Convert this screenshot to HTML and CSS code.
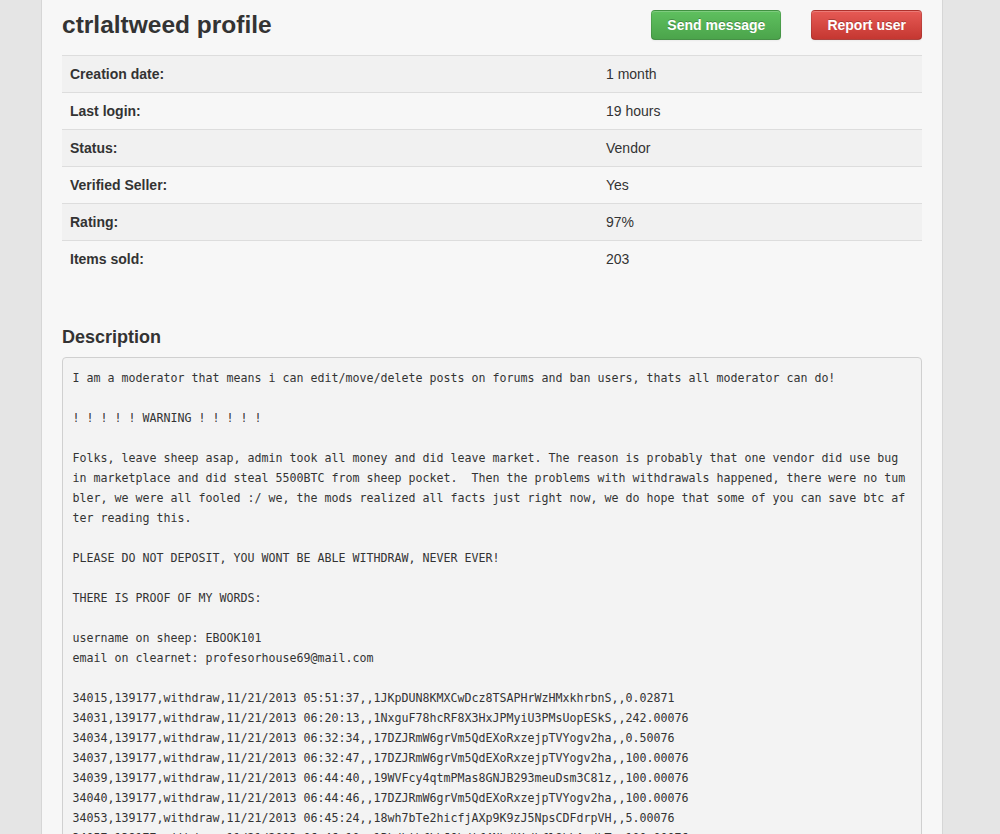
FILE: index.html
```html
<!DOCTYPE html>
<html lang="en">
<head>
<meta charset="utf-8">
<title>ctrlaltweed profile</title>
<link rel="stylesheet" href="styles.css">
</head>
<body>
<div class="panel">
  <div class="header">
    <h3 class="title">ctrlaltweed profile</h3>
    <div class="actions">
      <a class="btn btn-success" href="#">Send message</a>
      <a class="btn btn-danger" href="#">Report user</a>
    </div>
  </div>
  <table class="info">
    <tbody>
      <tr><th>Creation date:</th><td>1 month</td></tr>
      <tr><th>Last login:</th><td>19 hours</td></tr>
      <tr><th>Status:</th><td>Vendor</td></tr>
      <tr><th>Verified Seller:</th><td>Yes</td></tr>
      <tr><th>Rating:</th><td>97%</td></tr>
      <tr><th>Items sold:</th><td>203</td></tr>
    </tbody>
  </table>
  <h4 class="section-title">Description</h4>
  <pre class="description">I am a moderator that means i can edit/move/delete posts on forums and ban users, thats all moderator can do!

! ! ! ! ! WARNING ! ! ! ! !

Folks, leave sheep asap, admin took all money and did leave market. The reason is probably that one vendor did use bug in marketplace and did steal 5500BTC from sheep pocket.  Then the problems with withdrawals happened, there were no tumbler, we were all fooled :/ we, the mods realized all facts just right now, we do hope that some of you can save btc after reading this.

PLEASE DO NOT DEPOSIT, YOU WONT BE ABLE WITHDRAW, NEVER EVER!

THERE IS PROOF OF MY WORDS:

username on sheep: EBOOK101
email on clearnet: profesorhouse69@mail.com

34015,139177,withdraw,11/21/2013 05:51:37,,1JKpDUN8KMXCwDcz8TSAPHrWzHMxkhrbnS,,0.02871
34031,139177,withdraw,11/21/2013 06:20:13,,1NxguF78hcRF8X3HxJPMyiU3PMsUopESkS,,242.00076
34034,139177,withdraw,11/21/2013 06:32:34,,17DZJRmW6grVm5QdEXoRxzejpTVYogv2ha,,0.50076
34037,139177,withdraw,11/21/2013 06:32:47,,17DZJRmW6grVm5QdEXoRxzejpTVYogv2ha,,100.00076
34039,139177,withdraw,11/21/2013 06:44:40,,19WVFcy4qtmPMas8GNJB293meuDsm3C81z,,100.00076
34040,139177,withdraw,11/21/2013 06:44:46,,17DZJRmW6grVm5QdEXoRxzejpTVYogv2ha,,100.00076
34053,139177,withdraw,11/21/2013 06:45:24,,18wh7bTe2hicfjAXp9K9zJ5NpsCDFdrpVH,,5.00076
34057,139177,withdraw,11/21/2013 06:46:10,,1PkdhtbfLhJQbdtf4NbdKtdhfl8bhAwdhT,,100.00076
34061,139177,withdraw,11/21/2013 06:47:31,,17DZJRmW6grVm5QdEXoRxzejpTVYogv2ha,,50.00076</pre>
</div>
</body>
</html>
```

FILE: styles.css
```css
html, body {
  margin: 0;
  padding: 0;
}

body {
  background: #e5e5e5;
  font-family: "Liberation Sans", Arial, sans-serif;
  font-size: 14px;
  line-height: 20px;
  color: #333333;
}

.panel {
  width: 860px;
  margin-left: 41px;
  padding: 0 20px 40px;
  background: #f7f7f7;
  border-left: 1px solid #d6d6d6;
  border-right: 1px solid #d6d6d6;
}

.header {
  display: flex;
  align-items: center;
  justify-content: space-between;
  height: 40px;
  padding-top: 5px;
  margin-bottom: 10px;
}

.title {
  margin: 0;
  font-size: 24.5px;
  line-height: 40px;
  font-weight: bold;
  color: #333333;
}

.actions {
  display: flex;
  gap: 30px;
}

.btn {
  display: inline-block;
  padding: 4px 15px;
  font-size: 14px;
  line-height: 20px;
  font-weight: bold;
  color: #ffffff;
  text-decoration: none;
  text-shadow: 0 -1px 0 rgba(0, 0, 0, 0.25);
  border: 1px solid rgba(0, 0, 0, 0.12);
  border-bottom-color: rgba(0, 0, 0, 0.25);
  border-radius: 4px;
  box-shadow: inset 0 1px 0 rgba(255, 255, 255, 0.2), 0 1px 2px rgba(0, 0, 0, 0.05);
}

.btn-success {
  background: linear-gradient(to bottom, #5fc05f, #4ba44b);
}

.btn-danger {
  background: linear-gradient(to bottom, #e65a55, #c53731);
}

.info {
  width: 100%;
  border-collapse: collapse;
  border-spacing: 0;
  margin-bottom: 50px;
}

.info th,
.info td {
  padding: 8px;
  line-height: 20px;
  text-align: left;
  vertical-align: top;
  border-top: 1px solid #dddddd;
}

.info th {
  width: 520px;
  font-weight: bold;
}

.info tr:nth-child(odd) th,
.info tr:nth-child(odd) td {
  background: #f1f1f1;
}

.section-title {
  margin: 0 0 10px;
  font-size: 18px;
  line-height: 20px;
  font-weight: bold;
  color: #333333;
}

.description {
  margin: 0;
  padding: 9.5px;
  background: #f3f3f3;
  border: 1px solid #d0d0d0;
  border-radius: 4px;
  font-family: "DejaVu Sans Mono", "Liberation Mono", monospace;
  font-size: 11.63px;
  line-height: 20px;
  color: #333333;
  white-space: pre-wrap;
  word-break: break-all;
  word-wrap: break-word;
}
```
